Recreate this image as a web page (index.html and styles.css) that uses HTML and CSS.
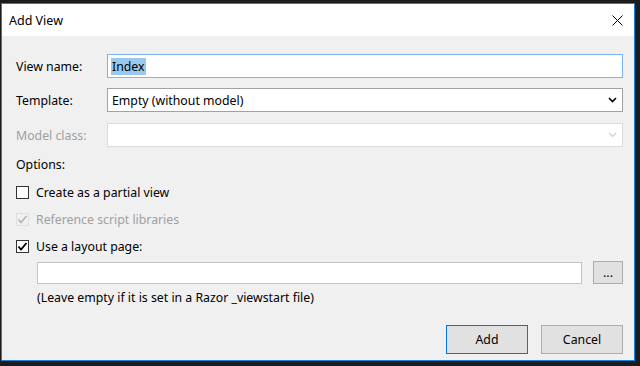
FILE: index.html
```html
<!DOCTYPE html>
<html lang="en">
<head>
    <meta charset="UTF-8">
    <title>Add View</title>
    <link rel="stylesheet" href="styles.css">
</head>
<body>
<div class="dialog">
    <div class="title_bar">
        <span class="title_text">Add View</span>
        <span class="close_btn">
            <svg width="11" height="11" viewBox="0 0 11 11"><path d="M0.5 0.5 L10.5 10.5 M10.5 0.5 L0.5 10.5" stroke="#000" stroke-width="1" fill="none"/></svg>
        </span>
    </div>

    <div class="dialog_body">
        <div class="form_row row_name">
            <label class="field_label">View name:</label>
            <div class="text_box focused"><span class="selected_text">Index</span></div>
        </div>
        <div class="form_row row_template">
            <label class="field_label">Template:</label>
            <div class="combo_box">
                <span>Empty (without model)</span>
                <svg class="chevron" width="9" height="6" viewBox="0 0 9 6"><path d="M1 1 L4.5 4.5 L8 1" stroke="#000" stroke-width="1.6" fill="none"/></svg>
            </div>
        </div>
        <div class="form_row row_model">
            <label class="field_label disabled">Model class:</label>
            <div class="combo_box disabled_box">
                <span></span>
                <svg class="chevron" width="9" height="6" viewBox="0 0 9 6"><path d="M1 1 L4.5 4.5 L8 1" stroke="#d0d0d0" stroke-width="1.2" fill="none"/></svg>
            </div>
        </div>

        <div class="options_label">Options:</div>

        <div class="check_row">
            <span class="check_box"></span>
            <span>Create as a partial view</span>
        </div>
        <div class="check_row disabled">
            <span class="check_box disabled_check">
                <svg width="11" height="11" viewBox="0 0 11 11"><path d="M1.5 5.5 L4 8.5 L9.5 2" stroke="#b5b5b5" stroke-width="1.6" fill="none"/></svg>
            </span>
            <span>Reference script libraries</span>
        </div>
        <div class="check_row">
            <span class="check_box">
                <svg width="11" height="11" viewBox="0 0 11 11"><path d="M1.5 5.5 L4 8.5 L9.5 2" stroke="#000" stroke-width="1.8" fill="none"/></svg>
            </span>
            <span>Use a layout page:</span>
        </div>

        <div class="layout_row">
            <div class="text_box layout_box"></div>
            <button class="win_button browse_btn">...</button>
        </div>
        <div class="hint_text">(Leave empty if it is set in a Razor _viewstart file)</div>

        <div class="button_row">
            <button class="win_button default_btn">Add</button>
            <button class="win_button">Cancel</button>
        </div>
    </div>
</div>
</body>
</html>
```

FILE: styles.css
```css
html, body{
    margin: 0;
    height: 100%;
}

body{
    background-color: #1c1c1c;
    padding: 3px 5px 5px 1px;
    box-sizing: border-box;
    font-family: 'Noto Sans', 'Open Sans', sans-serif;
    font-size: 12.3px;
    color: #000;
}

.dialog{
    width: 634px;
    height: 358px;
    box-sizing: border-box;
    border: 1px solid #1883d7;
    background-color: #f0f0f0;
    display: flex;
    flex-direction: column;
}

.title_bar{
    height: 32px;
    background-color: #fff;
    display: flex;
    align-items: center;
    justify-content: space-between;
    padding: 0 11px 0 7px;
    flex-shrink: 0;
}

.title_text{
    font-size: 12.5px;
}

.close_btn{
    display: flex;
    align-items: center;
}

.dialog_body{
    padding: 18px 11px 0 14px;
    display: flex;
    flex-direction: column;
}

.form_row{
    display: grid;
    grid-template-columns: 91px 1fr;
    align-items: center;
    height: 24px;
}

.row_template{
    margin-top: 10px;
}

.row_model{
    margin-top: 11px;
}

.field_label.disabled{
    color: #a0a0a0;
}

.text_box{
    height: 24px;
    box-sizing: border-box;
    background-color: #fff;
    border: 1px solid #abadb3;
    display: flex;
    align-items: center;
    padding-left: 3px;
}

.text_box.focused{
    border-color: #7eb4ea;
}

.selected_text{
    background-color: #99c9ef;
    padding: 1px 1px;
    line-height: 15px;
}

.combo_box{
    height: 24px;
    box-sizing: border-box;
    background-color: #fff;
    border: 1px solid #a2a2a2;
    display: flex;
    align-items: center;
    justify-content: space-between;
    padding: 0 5px 0 4px;
}

.combo_box.disabled_box{
    border-color: #dcdcdc;
}

.options_label{
    margin-top: 8px;
    height: 20px;
    line-height: 20px;
}

.check_row{
    height: 27px;
    display: flex;
    align-items: center;
    gap: 7px;
}

.options_label + .check_row{
    margin-top: 4px;
}

.check_row.disabled{
    color: #a0a0a0;
}

.check_box{
    width: 13px;
    height: 13px;
    box-sizing: border-box;
    border: 1px solid #333;
    background-color: #fff;
    display: flex;
    align-items: center;
    justify-content: center;
}

.check_box.disabled_check{
    border-color: #e0e0e0;
    background-color: #f0f0f0;
}

.layout_row{
    display: flex;
    align-items: center;
    margin-top: 1px;
    padding-left: 21px;
    gap: 11px;
}

.layout_box{
    flex: 1;
    height: 22px;
    border-color: #c4c4c4;
}

.win_button{
    font-family: inherit;
    font-size: 12.3px;
    color: #000;
    background-color: #e1e1e1;
    border: 1px solid #adadad;
    border-radius: 0;
    padding: 0;
    margin: 0;
}

.browse_btn{
    width: 30px;
    height: 23px;
    line-height: 14px;
}

.hint_text{
    margin-top: 4px;
    height: 20px;
    line-height: 20px;
    padding-left: 21px;
}

.button_row{
    margin-top: 17px;
    display: flex;
    justify-content: flex-end;
    gap: 13px;
}

.button_row .win_button{
    width: 82px;
    height: 29px;
}

.default_btn{
    border-color: #0078d7;
}
```
